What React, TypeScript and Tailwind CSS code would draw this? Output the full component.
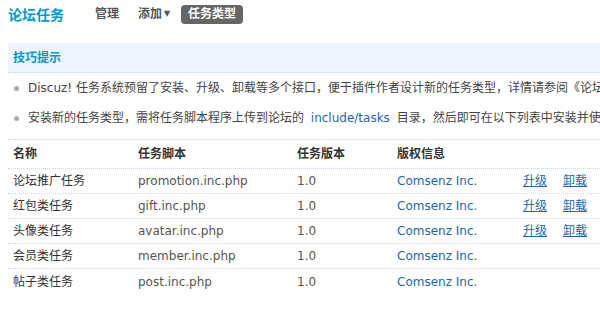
import React from "react";

const rows = [
  { name: "论坛推广任务", script: "promotion.inc.php", links: true },
  { name: "红包类任务", script: "gift.inc.php", links: true },
  { name: "头像类任务", script: "avatar.inc.php", links: true },
  { name: "会员类任务", script: "member.inc.php", links: false },
  { name: "帖子类任务", script: "post.inc.php", links: false },
];

const font = { fontFamily: '"DejaVu Sans", "Noto Sans CJK SC", sans-serif' };

export default function App() {
  return (
    <div
      className="w-[600px] h-[309px] overflow-hidden bg-white pl-[8px] text-[12px] text-[#333] whitespace-nowrap"
      style={font}
    >
      <div className="flex items-center h-[27px] pt-[1px]">
        <span className="text-[14px] font-bold text-[#0099cc] w-[87px]" style={{ fontFamily: '"Noto Sans CJK SC", sans-serif' }}>论坛任务</span>
        <span className="font-bold text-[#555] w-[43px]">管理</span>
        <span className="font-bold text-[#555] flex items-center w-[43px]">
          添加<span className="text-[8px] ml-[2px]">▼</span>
        </span>
        <span className="font-bold text-white bg-[#666] rounded-[4px] h-[19px] px-[7px] flex items-center">任务类型</span>
      </div>
      <div className="mt-[16px] h-[30px] bg-[#eef5fc] border-b border-dotted border-[#c4d8ec] flex items-center pl-[5px]">
        <span className="font-bold text-[#0099cc]">技巧提示</span>
      </div>
      <ul className="text-[#444]">
        <li className="h-[30px] flex items-center pl-[6px]">
          <span className="shrink-0 w-[5px] h-[5px] rounded-full bg-[#aaa] mr-[9px]" />
          <span className="shrink-0">Discuz! 任务系统预留了安装、升级、卸载等多个接口，便于插件作者设计新的任务类型，详情请参阅《论坛任务开发手册》</span>
        </li>
        <li className="h-[30px] flex items-center pl-[6px]">
          <span className="shrink-0 w-[5px] h-[5px] rounded-full bg-[#aaa] mr-[9px]" />
          <span className="shrink-0">
            安装新的任务类型，需将任务脚本程序上传到论坛的 <span className="text-[#2366a8] mx-[3px]">include/tasks</span> 目录，然后即可在以下列表中安装并使用了
          </span>
        </li>
      </ul>
      <div className="mt-[6px] border-t border-dotted border-[#c4d8ec]">
        <div className="grid grid-cols-[125px_159px_100px_126px_40px_1fr] h-[29px] items-center border-b border-dotted border-[#c4d8ec] font-bold text-[#333]">
          <span className="pl-[5px]">名称</span>
          <span className="pl-[5px]">任务脚本</span>
          <span className="pl-[5px]">任务版本</span>
          <span className="pl-[5px]">版权信息</span>
          <span />
          <span />
        </div>
        {rows.map((r, i) => (
          <div
            key={r.script}
            className={`grid grid-cols-[125px_159px_100px_126px_40px_1fr] h-[25px] items-center ${i < rows.length - 1 ? "border-b border-dotted border-[#c4d8ec]" : ""}`}
          >
            <span className="pl-[5px] text-[#333]">{r.name}</span>
            <span className="pl-[5px] text-[#555]">{r.script}</span>
            <span className="pl-[5px] text-[#555]">1.0</span>
            <span className="pl-[5px] text-[#2366a8]">Comsenz Inc.</span>
            <span className="pl-[5px]">
              {r.links && <a className="text-[#2366a8] underline">升级</a>}
            </span>
            <span className="pl-[5px]">
              {r.links && <a className="text-[#2366a8] underline">卸载</a>}
            </span>
          </div>
        ))}
      </div>
    </div>
  );
}
